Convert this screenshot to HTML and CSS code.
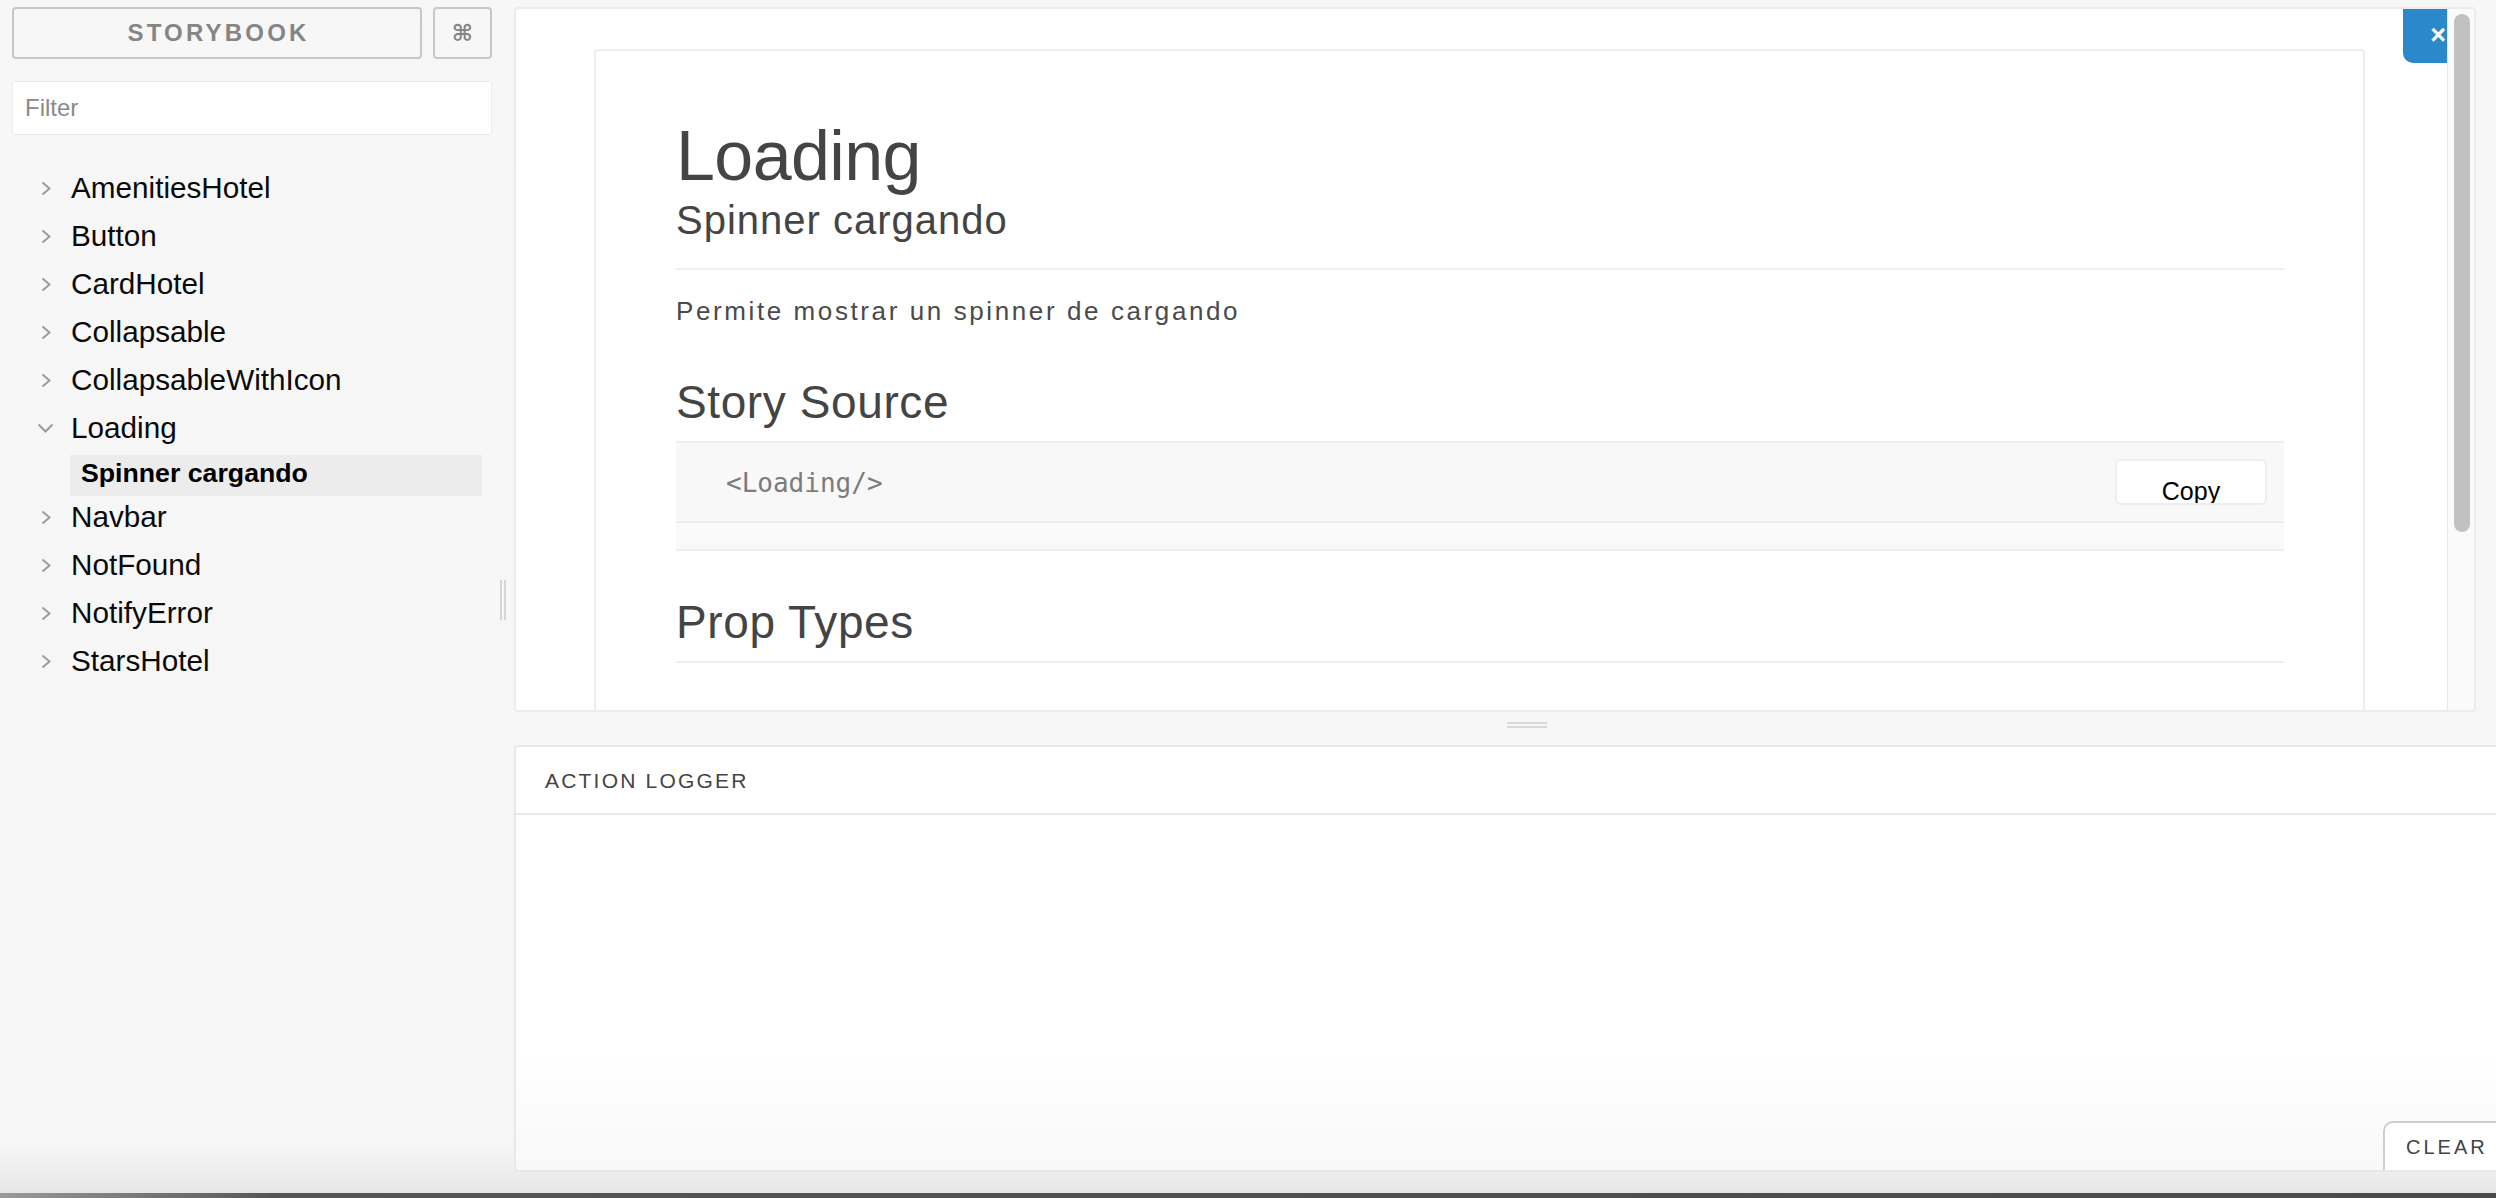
FILE: index.html
```html
<!DOCTYPE html>
<html lang="es">
<head>
<meta charset="utf-8">
<title>Storybook</title>
<link rel="stylesheet" href="styles.css">
</head>
<body>
<div class="app">
  <aside class="sidebar">
    <div class="brand-row">
      <div class="brand">STORYBOOK</div>
      <div class="cmd">⌘</div>
    </div>
    <div class="filter">Filter</div>
    <ul class="tree">
      <li class="node"><span class="chev"><svg width="10" height="15" viewBox="0 0 10 15"><polyline points="1.5,1.5 8.5,7.5 1.5,13.5" fill="none" stroke="#9b9b9b" stroke-width="2"/></svg></span>AmenitiesHotel</li>
      <li class="node"><span class="chev"><svg width="10" height="15" viewBox="0 0 10 15"><polyline points="1.5,1.5 8.5,7.5 1.5,13.5" fill="none" stroke="#9b9b9b" stroke-width="2"/></svg></span>Button</li>
      <li class="node"><span class="chev"><svg width="10" height="15" viewBox="0 0 10 15"><polyline points="1.5,1.5 8.5,7.5 1.5,13.5" fill="none" stroke="#9b9b9b" stroke-width="2"/></svg></span>CardHotel</li>
      <li class="node"><span class="chev"><svg width="10" height="15" viewBox="0 0 10 15"><polyline points="1.5,1.5 8.5,7.5 1.5,13.5" fill="none" stroke="#9b9b9b" stroke-width="2"/></svg></span>Collapsable</li>
      <li class="node"><span class="chev"><svg width="10" height="15" viewBox="0 0 10 15"><polyline points="1.5,1.5 8.5,7.5 1.5,13.5" fill="none" stroke="#9b9b9b" stroke-width="2"/></svg></span>CollapsableWithIcon</li>
      <li class="node open"><span class="chev"><svg width="17" height="10" viewBox="0 0 17 10"><polyline points="1.5,1.5 8.5,8.5 15.5,1.5" fill="none" stroke="#9b9b9b" stroke-width="2"/></svg></span>Loading</li>
      <li class="leaf selected">Spinner cargando</li>
      <li class="node"><span class="chev"><svg width="10" height="15" viewBox="0 0 10 15"><polyline points="1.5,1.5 8.5,7.5 1.5,13.5" fill="none" stroke="#9b9b9b" stroke-width="2"/></svg></span>Navbar</li>
      <li class="node"><span class="chev"><svg width="10" height="15" viewBox="0 0 10 15"><polyline points="1.5,1.5 8.5,7.5 1.5,13.5" fill="none" stroke="#9b9b9b" stroke-width="2"/></svg></span>NotFound</li>
      <li class="node"><span class="chev"><svg width="10" height="15" viewBox="0 0 10 15"><polyline points="1.5,1.5 8.5,7.5 1.5,13.5" fill="none" stroke="#9b9b9b" stroke-width="2"/></svg></span>NotifyError</li>
      <li class="node"><span class="chev"><svg width="10" height="15" viewBox="0 0 10 15"><polyline points="1.5,1.5 8.5,7.5 1.5,13.5" fill="none" stroke="#9b9b9b" stroke-width="2"/></svg></span>StarsHotel</li>
    </ul>
  </aside>
  <div class="vhandle"><span></span><span></span></div>
  <main class="main">
    <section class="preview">
      <div class="frame">
        <div class="close" role="button">×</div>
        <article class="card">
          <header class="card-head">
            <h1>Loading</h1>
            <h2>Spinner cargando</h2>
          </header>
          <p class="desc">Permite mostrar un spinner de cargando</p>
          <h3 class="section-title">Story Source</h3>
          <div class="source">
            <pre>&lt;Loading/&gt;</pre>
            <div class="source-foot"></div>
            <div class="copy" role="button">Copy</div>
          </div>
          <h3 class="section-title props">Prop Types</h3>
        </article>
      </div>
      <div class="track"><div class="thumb"></div></div>
    </section>
    <div class="hhandle"><span></span><span></span></div>
    <section class="logger">
      <div class="logger-head">ACTION LOGGER</div>
      <div class="clear" role="button">CLEAR</div>
    </section>
  </main>
</div>
<div class="dock"></div>
</body>
</html>
```

FILE: styles.css
```css
* { box-sizing: border-box; }

html, body {
  margin: 0;
  padding: 0;
  height: 1198px;
  overflow: hidden;
}

body {
  font-family: "Liberation Sans", Arial, sans-serif;
  background: #f7f7f7;
  color: #000;
}

.app {
  display: flex;
  height: 1193px;
  background: linear-gradient(#f7f7f7 0, #f6f6f6 calc(100% - 48px), #e6e6e6 100%);
}

.dock {
  height: 5px;
  background: linear-gradient(to right, #9a9a9a 0, #555 280px, #4a4a4a 100%);
}

/* ---------- Sidebar ---------- */
.sidebar {
  width: 500px;
  flex: none;
  padding: 7px 8px 0 12px;
}

.brand-row {
  display: flex;
  gap: 11px;
  height: 52px;
}

.brand {
  width: 410px;
  height: 52px;
  border: 2px solid #c8c8c8;
  border-radius: 4px;
  display: flex;
  align-items: center;
  justify-content: center;
  font-weight: 700;
  font-size: 24px;
  letter-spacing: 3.2px;
  padding-left: 3px;
  color: #858585;
}

.cmd {
  width: 59px;
  height: 52px;
  border: 2px solid #c8c8c8;
  border-radius: 4px;
  display: flex;
  align-items: center;
  justify-content: center;
  font-family: "DejaVu Sans", sans-serif;
  font-weight: 700;
  font-size: 23px;
  color: #858585;
}

.filter {
  margin-top: 22px;
  height: 54px;
  background: #fff;
  border: 1px solid #ececec;
  border-radius: 3px;
  padding-left: 12px;
  display: flex;
  align-items: center;
  font-size: 24px;
  color: #8a8a8a;
}

.tree {
  list-style: none;
  margin: 30.6px 0 0;
  padding: 0;
}

.node {
  display: flex;
  align-items: flex-start;
  height: 48px;
  line-height: 44px;
  padding: 0 0 4px 29px;
  font-size: 29.7px;
  color: #0a0a0a;
}

.chev {
  width: 30px;
  flex: none;
  display: flex;
  align-items: center;
  height: 45px;
}

.open .chev svg {
  margin-left: -4px;
}

.leaf {
  margin: 1px 0 0 58px;
  width: 412px;
  height: 41px;
  line-height: 35px;
  padding: 1px 0 5px 11px;
  font-size: 26.7px;
  font-weight: 700;
  color: #000;
}

.selected {
  background: #ececec;
}

.leaf + .node {
  margin-top: -1px;
}

.vhandle {
  width: 13px;
  flex: none;
  display: flex;
  gap: 2px;
  padding-top: 580px;
}

.vhandle span {
  width: 2px;
  height: 40px;
  background: #d6d6d6;
}

/* ---------- Main ---------- */
.main {
  flex: 1;
  min-width: 0;
  overflow: hidden;
  display: flex;
  flex-direction: column;
}

.preview {
  margin: 7px 0 0 1px;
  width: 1962px;
  height: 705px;
  flex: none;
  background: #fff;
  border: 2px solid #ececec;
  border-radius: 4px;
  display: flex;
  overflow: hidden;
}

.frame {
  flex: 1;
  position: relative;
  overflow: hidden;
  padding: 40px 82px 0 78px;
}

.close {
  position: absolute;
  top: -1px;
  right: 0;
  width: 44px;
  height: 55px;
  border-bottom-left-radius: 10px;
  background: #2b88cb;
  color: #fff;
  font-weight: 700;
  font-size: 27px;
  line-height: 27px;
  padding: 14px 1px 0 0;
  text-align: right;
  overflow: hidden;
}

.card {
  border: 2px solid #eeeeee;
  border-radius: 4px;
  padding: 70px 79px 0 80px;
  height: 900px;
  color: #444;
}

.card-head {
  border-bottom: 2px solid #eeeeee;
  padding-bottom: 28px;
}

.card h1 {
  margin: 0;
  font-size: 70px;
  line-height: 70px;
  font-weight: 400;
  letter-spacing: -0.6px;
  color: #444;
}

.card h2 {
  margin: 9px 0 0;
  font-size: 40px;
  line-height: 40px;
  font-weight: 400;
  letter-spacing: 1px;
  color: #444;
}

.desc {
  margin: 28px 0 0;
  font-size: 26px;
  line-height: 26px;
  letter-spacing: 2.6px;
  color: #4a4a4a;
}

.section-title {
  margin: 55px 0 16px;
  font-size: 46px;
  line-height: 46px;
  font-weight: 400;
  letter-spacing: 0.6px;
  color: #444;
}

.source {
  position: relative;
  border-top: 2px solid #eeeeee;
  border-bottom: 2px solid #eeeeee;
  background: #f8f8f8;
}

.source pre {
  margin: 0;
  padding: 27px 50px;
  height: 80px;
  border-bottom: 2px solid #eeeeee;
  font-family: "DejaVu Sans Mono", "Liberation Mono", monospace;
  font-size: 26px;
  line-height: 26px;
  color: #7c7c7c;
}

.source-foot {
  height: 26px;
  background: #f9f9f9;
}

.copy {
  position: absolute;
  top: 16px;
  right: 17px;
  width: 152px;
  height: 46px;
  background: #fff;
  border: 2px solid #eeeeee;
  border-radius: 6px;
  padding: 18px 0 0;
  font-size: 25px;
  line-height: 25px;
  color: #000;
  overflow: hidden;
  text-align: center;
}

.props {
  margin: 48px 0 0;
  padding-bottom: 16px;
  border-bottom: 2px solid #eeeeee;
}

.track {
  width: 27px;
  flex: none;
  border-left: 1px solid #e6e6e6;
  background: #fafafa;
  padding: 5px 0 0 6px;
}

.thumb {
  width: 16px;
  height: 518px;
  border-radius: 8px;
  background: #c1c1c1;
}

.hhandle {
  height: 33px;
  flex: none;
  display: flex;
  flex-direction: column;
  gap: 2px;
  padding: 10px 0 0 994px;
}

.hhandle span {
  width: 40px;
  height: 2px;
  background: #d8d8d8;
}

.logger {
  position: relative;
  margin-left: 1px;
  width: 1995px;
  height: 427px;
  flex: none;
  border: 2px solid #e8e8e8;
  border-radius: 4px 0 0 4px;
  background: linear-gradient(#fff 0, #fff 72%, #f8f8f8 100%);
}

.logger-head {
  padding: 23px 0 22px 29px;
  font-size: 21px;
  line-height: 21px;
  letter-spacing: 2.2px;
  color: #444;
  border-bottom: 2px solid #e8e8e8;
}

.clear {
  position: absolute;
  bottom: 0;
  right: -12px;
  width: 136px;
  height: 49px;
  border: 2px solid #cfcfcf;
  border-bottom: 0;
  border-top-left-radius: 10px;
  background: #fff;
  padding: 14px 0 0 21px;
  font-size: 20px;
  line-height: 20px;
  letter-spacing: 3px;
  color: #444;
}
```
